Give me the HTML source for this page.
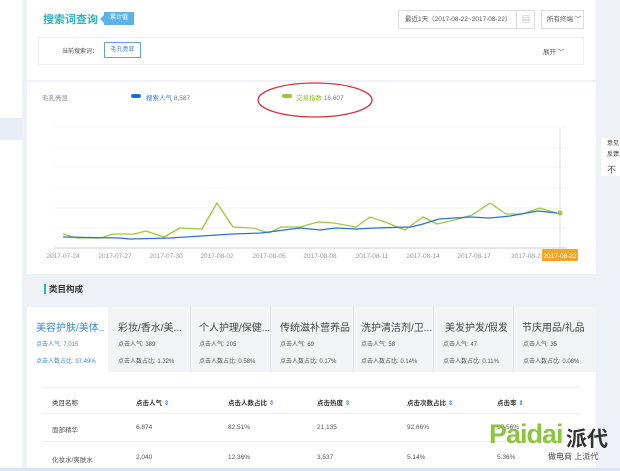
<!DOCTYPE html>
<html><head><meta charset="utf-8"><style>
*{margin:0;padding:0;box-sizing:border-box}
body{width:620px;height:471px;overflow:hidden;background:#eef1f5;font-family:"Liberation Sans","Noto Sans CJK SC",sans-serif;font-size:7px;color:#555;position:relative}
.a{position:absolute;white-space:nowrap}
</style></head><body>
<div class="a" style="left:0;top:0;width:22px;height:471px;background:#fff"></div>
<div class="a" style="left:0;top:118px;width:22px;height:22px;background:#e7eef8"></div>
<!-- header panel -->
<div class="a" style="left:27px;top:0;width:569px;height:80px;background:#fff"></div>
<div class="a" style="left:43px;top:11px;font-size:11px;color:#2fb3c6;font-weight:bold">搜索词查询</div>
<div class="a" style="left:100px;top:15px;width:0;height:0;border-top:4px solid transparent;border-bottom:4px solid transparent;border-right:4px solid #5db3e8"></div>
<div class="a" style="left:104px;top:12px;width:30px;height:13px;background:#5db3e8;color:#fff;font-size:6px;line-height:13px;text-align:center">累计值</div>
<div class="a" style="left:398px;top:10px;width:137px;height:19px;border:1px solid #ddd;font-size:6.5px;line-height:17px;padding-left:6px;color:#555">最近1天（2017-08-22~2017-08-22）</div>
<div class="a" style="left:516px;top:10px;width:19px;height:19px;border-left:1px solid #ddd;font-size:8px;line-height:19px;text-align:center;color:#888">▤</div>
<div class="a" style="left:541px;top:10px;width:43px;height:19px;border:1px solid #ddd;font-size:6.5px;line-height:17px;padding-left:5px">所有终端 ﹀</div>
<div class="a" style="left:38px;top:37px;width:546px;height:28px;border:1px solid #eceef2"></div>
<div class="a" style="left:62px;top:46px;font-size:6px">当前搜索词：</div>
<div class="a" style="left:104px;top:42px;width:37px;height:16px;border:1px solid #6a9de0;font-size:6px;line-height:14px;text-align:center;color:#3a7bd5">毛孔亮显</div>
<div class="a" style="left:543px;top:46px;font-size:6.5px">展开 ﹀</div>
<!-- chart panel -->
<div class="a" style="left:27px;top:82px;width:569px;height:192px;background:#fff"></div>
<div class="a" style="left:42px;top:92px;font-size:6.5px;color:#888">毛孔亮显</div>
<div class="a" style="left:131px;top:94px;width:10px;height:4px;border-radius:2px;background:#1f6fd8"></div>
<div class="a" style="left:146px;top:92px;font-size:6.5px;color:#777"><span style="color:#3a7bd5">搜索人气</span> 8,587</div>
<div class="a" style="left:282px;top:94px;width:10px;height:4px;border-radius:2px;background:#9ac43a"></div>
<div class="a" style="left:296px;top:92px;font-size:6.5px;color:#777"><span style="color:#8cbf2a">交易指数</span> 16,607</div>
<svg class="a" style="left:0;top:0" width="620" height="471">
<ellipse cx="315" cy="100" rx="57" ry="17" fill="none" stroke="#d9303a" stroke-width="1.3"/>
<g stroke="#f3f3f3" stroke-width="1"><line x1="54" y1="127" x2="567" y2="127"/><line x1="54" y1="148" x2="567" y2="148"/><line x1="54" y1="167" x2="567" y2="167"/><line x1="54" y1="188" x2="567" y2="188"/><line x1="54" y1="208" x2="567" y2="208"/><line x1="54" y1="228" x2="567" y2="228"/></g>
<line x1="54" y1="248" x2="567" y2="248" stroke="#ccc"/>
<line x1="560" y1="128" x2="560" y2="248" stroke="#ddd"/>
<polyline fill="none" stroke="#9ccb3c" stroke-width="1.3" stroke-linejoin="round" points="63,234 77,238 101,238 113,234 134,234 146,231 164,237 180,228 202,229 217,203 233,227 253,228 269,233 281,227 300,227 318,222 334,223 356,227 370,217 385,222 405,230 423,217 437,224 455,220 472,215 490,203 506,214 522,214 540,208 559,214"/>
<polyline fill="none" stroke="#2c74d0" stroke-width="1.3" stroke-linejoin="round" points="63,237 119,238 130,239 170,238 217,235 233,234 261,233 300,228 320,230 336,228 356,229 375,228 411,227 423,224 439,219 470,217 490,218 510,216 538,211 557,213"/>
<circle cx="560" cy="213" r="2.5" fill="#9ccb3c"/>
<g font-size="6.5" fill="#999" text-anchor="middle" font-family="Liberation Sans,sans-serif"><text x="63" y="258">2017-07-24</text><text x="115" y="258">2017-07-27</text><text x="166" y="258">2017-07-30</text><text x="217" y="258">2017-08-02</text><text x="269" y="258">2017-08-05</text><text x="320" y="258">2017-08-08</text><text x="372" y="258">2017-08-11</text><text x="423" y="258">2017-08-14</text><text x="474" y="258">2017-08-17</text><text x="526" y="258">2017-08-2</text></g>
<rect x="542" y="249" width="36" height="12" fill="#f5a623" rx="1"/>
<text x="560" y="258" font-size="6.5" fill="#fff" text-anchor="middle" font-family="Liberation Sans,sans-serif">2017-08-22</text>
</svg>
<!-- category -->
<div class="a" style="left:44px;top:284px;width:2px;height:10px;background:#2fb3c6"></div>
<div class="a" style="left:49px;top:283px;font-size:8.5px;color:#333;font-weight:bold">类目构成</div>
<div class="a" style="left:27px;top:307px;width:569px;height:66px;background:#f3f4f6"></div>
<div class="a" style="left:27px;top:307px;width:81px;height:66px;background:#fff"></div>
<div class="a" style="left:27px;top:372px;width:569px;height:99px;background:#fff"></div>
<div class="a" style="left:190px;top:307px;width:1px;height:66px;background:#e6e7ea"></div>
<div class="a" style="left:270px;top:307px;width:1px;height:66px;background:#e6e7ea"></div>
<div class="a" style="left:353px;top:307px;width:1px;height:66px;background:#e6e7ea"></div>
<div class="a" style="left:433px;top:307px;width:1px;height:66px;background:#e6e7ea"></div>
<div class="a" style="left:513px;top:307px;width:1px;height:66px;background:#e6e7ea"></div>
<div class="a" style="left:36px;top:319px;font-size:10px;color:#3a86d6">美容护肤/美体..</div>
<div class="a" style="left:36px;top:339px;font-size:6px;color:#3a86d6">点击人气: 7,015</div>
<div class="a" style="left:36px;top:356px;font-size:6px;color:#3a86d6">点击人数占比: 97.49%</div>
<div class="a" style="left:118px;top:319px;font-size:10px;color:#444">彩妆/香水/美...</div>
<div class="a" style="left:118px;top:339px;font-size:6px">点击人气: 389</div>
<div class="a" style="left:118px;top:356px;font-size:6px">点击人数占比: 1.32%</div>
<div class="a" style="left:199px;top:319px;font-size:10px;color:#444">个人护理/保健...</div>
<div class="a" style="left:199px;top:339px;font-size:6px">点击人气: 205</div>
<div class="a" style="left:199px;top:356px;font-size:6px">点击人数占比: 0.58%</div>
<div class="a" style="left:280px;top:319px;font-size:10px;color:#444">传统滋补营养品</div>
<div class="a" style="left:280px;top:339px;font-size:6px">点击人气: 69</div>
<div class="a" style="left:280px;top:356px;font-size:6px">点击人数占比: 0.17%</div>
<div class="a" style="left:361px;top:319px;font-size:10px;color:#444">洗护清洁剂/卫...</div>
<div class="a" style="left:361px;top:339px;font-size:6px">点击人气: 58</div>
<div class="a" style="left:361px;top:356px;font-size:6px">点击人数占比: 0.14%</div>
<div class="a" style="left:445px;top:319px;font-size:10px;color:#444">美发护发/假发</div>
<div class="a" style="left:443px;top:339px;font-size:6px">点击人气: 47</div>
<div class="a" style="left:443px;top:356px;font-size:6px">点击人数占比: 0.11%</div>
<div class="a" style="left:522px;top:319px;font-size:10px;color:#444">节庆用品/礼品</div>
<div class="a" style="left:523px;top:339px;font-size:6px">点击人气: 35</div>
<div class="a" style="left:523px;top:356px;font-size:6px">点击人数占比: 0.08%</div>
<!-- table -->
<div class="a" style="left:43px;top:387px;width:537px;height:1px;background:#eee"></div>
<div class="a" style="left:43px;top:413px;width:537px;height:1px;background:#eee"></div>
<div class="a" style="left:43px;top:441px;width:537px;height:1px;background:#eee"></div>
<div class="a" style="left:52px;top:397px;font-size:6.5px;color:#333">类目名称</div>
<div class="a" style="left:136px;top:397px;font-size:6.5px;color:#333;font-weight:bold">点击人气 <span style="color:#5a9be0">⇕</span></div>
<div class="a" style="left:228px;top:397px;font-size:6.5px;color:#333;font-weight:bold">点击人数占比 <span style="color:#5a9be0">⇕</span></div>
<div class="a" style="left:317px;top:397px;font-size:6.5px;color:#333;font-weight:bold">点击热度 <span style="color:#5a9be0">⇕</span></div>
<div class="a" style="left:407px;top:397px;font-size:6.5px;color:#333;font-weight:bold">点击次数占比 <span style="color:#5a9be0">⇕</span></div>
<div class="a" style="left:497px;top:397px;font-size:6.5px;color:#333;font-weight:bold">点击率 <span style="color:#5a9be0">⇕</span></div>
<div class="a" style="left:52px;top:424px;font-size:6.5px">面部精华</div>
<div class="a" style="left:136px;top:424px;font-size:6.5px">6,874</div>
<div class="a" style="left:228px;top:424px;font-size:6.5px">82.51%</div>
<div class="a" style="left:317px;top:424px;font-size:6.5px">21,135</div>
<div class="a" style="left:407px;top:424px;font-size:6.5px">92.66%</div>
<div class="a" style="left:497px;top:424px;font-size:6.5px">96.56%</div>
<div class="a" style="left:52px;top:454px;font-size:6.5px">化妆水/爽肤水</div>
<div class="a" style="left:136px;top:454px;font-size:6.5px">2,040</div>
<div class="a" style="left:228px;top:454px;font-size:6.5px">12.36%</div>
<div class="a" style="left:317px;top:454px;font-size:6.5px">3,537</div>
<div class="a" style="left:407px;top:454px;font-size:6.5px">5.14%</div>
<div class="a" style="left:497px;top:454px;font-size:6.5px">5.36%</div>
<div class="a" style="left:0;top:468px;width:620px;height:3px;background:#d6e4f5"></div>
<!-- watermark -->
<div class="a" style="left:489px;top:419px;font-size:27px;font-weight:bold;color:#8cc63f;letter-spacing:-1px">Paidai</div>
<div class="a" style="left:566px;top:423px;font-size:21px;font-weight:bold;color:#333">派代</div>
<div class="a" style="left:548px;top:451px;font-size:8px;color:#444">做电商 上派代</div>
<!-- right widget -->
<div class="a" style="left:601px;top:138px;width:19px;height:38px;background:#fff"></div>
<div class="a" style="left:607px;top:139px;font-size:6px;line-height:11px;color:#333">意见<br>反馈</div>
<div class="a" style="left:607px;top:163px;font-size:9px;color:#555">不</div>
</body></html>
